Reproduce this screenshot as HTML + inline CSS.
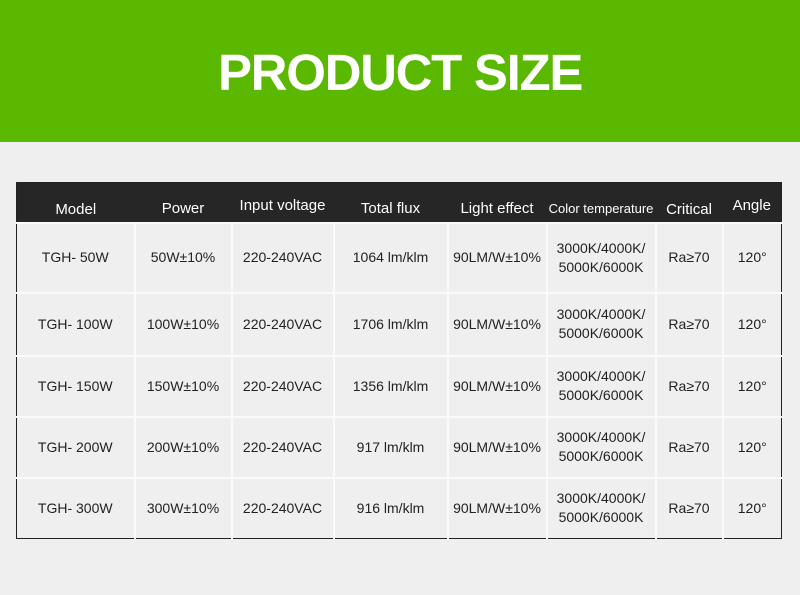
<!DOCTYPE html>
<html><head><meta charset="utf-8"><style>
*{margin:0;padding:0;box-sizing:border-box}
body{width:800px;height:595px;background:#efefef;font-family:"Liberation Sans",sans-serif;position:relative;overflow:hidden}
.top{position:absolute;left:0;top:0;width:800px;height:142px;background:#5bb801}
.title{position:absolute;left:0;width:800px;top:43px;text-align:center;color:#fff;font-weight:bold;font-size:51px;letter-spacing:-1.3px;line-height:60px}
table{position:absolute;left:16px;top:182px;width:765px;border-collapse:collapse;border:1.5px solid #222;table-layout:fixed}
th{background:#262626;color:#fff;font-weight:normal;font-size:15px;height:40px;padding-top:8px}
td{background:#efeff0;color:#222;font-size:14px;text-align:center;border:2px solid #fafafa;line-height:19px}
tr:last-child td{border-bottom:none}
td:first-child{border-left:none}td:last-child{border-right:none}
</style></head><body>
<div class="top"></div>
<div class="title">PRODUCT SIZE</div>
<table>
<colgroup><col style="width:118px"><col style="width:97px"><col style="width:102px"><col style="width:114px"><col style="width:99px"><col style="width:109px"><col style="width:67px"><col style="width:59px"></colgroup>
<tr><th style="padding-top:14px">Model</th><th style="padding-top:12px">Power</th><th style="padding-top:6px">Input voltage</th><th style="padding-top:12px">Total flux</th><th style="padding-top:12px">Light effect</th><th style="font-size:13px;padding-top:12px">Color temperature</th><th style="padding-top:14px">Critical</th><th style="padding-top:6px">Angle</th></tr>
<tr style="height:70px"><td>TGH- 50W</td><td>50W±10%</td><td>220-240VAC</td><td>1064 lm/klm</td><td>90LM/W±10%</td><td>3000K/4000K/<br>5000K/6000K</td><td>Ra≥70</td><td>120°</td></tr>
<tr style="height:63px"><td>TGH- 100W</td><td>100W±10%</td><td>220-240VAC</td><td>1706 lm/klm</td><td>90LM/W±10%</td><td>3000K/4000K/<br>5000K/6000K</td><td>Ra≥70</td><td>120°</td></tr>
<tr style="height:61px"><td>TGH- 150W</td><td>150W±10%</td><td>220-240VAC</td><td>1356 lm/klm</td><td>90LM/W±10%</td><td>3000K/4000K/<br>5000K/6000K</td><td>Ra≥70</td><td>120°</td></tr>
<tr style="height:61px"><td>TGH- 200W</td><td>200W±10%</td><td>220-240VAC</td><td>917 lm/klm</td><td>90LM/W±10%</td><td>3000K/4000K/<br>5000K/6000K</td><td>Ra≥70</td><td>120°</td></tr>
<tr style="height:61px"><td>TGH- 300W</td><td>300W±10%</td><td>220-240VAC</td><td>916 lm/klm</td><td>90LM/W±10%</td><td>3000K/4000K/<br>5000K/6000K</td><td>Ra≥70</td><td>120°</td></tr>
</table>
</body></html>
